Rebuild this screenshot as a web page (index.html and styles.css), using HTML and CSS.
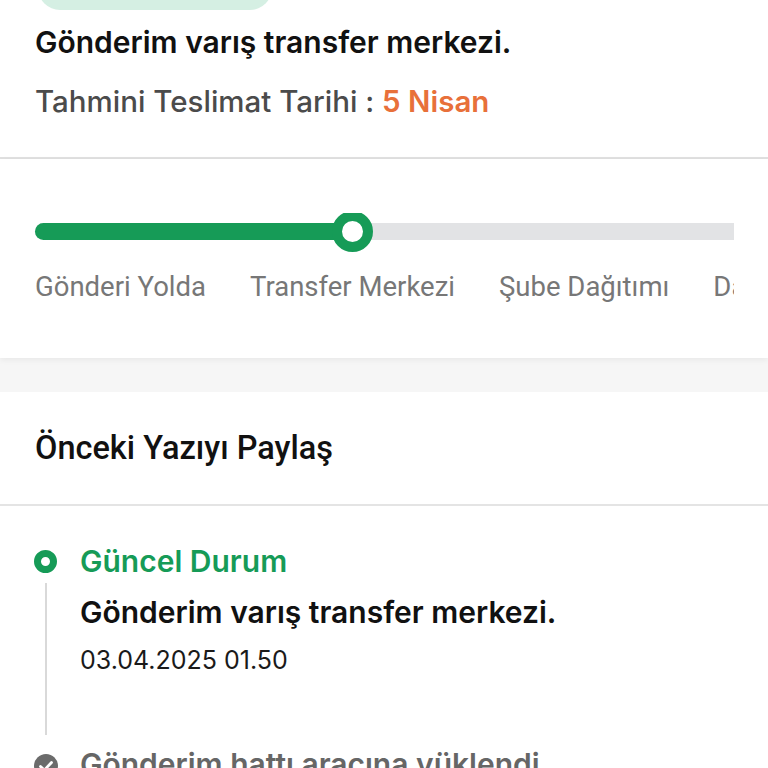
FILE: index.html
```html
<!DOCTYPE html>
<html lang="tr">
<head>
  <meta charset="UTF-8" />
  <meta name="viewport" content="width=device-width, initial-scale=1.0" />
  <title>Gönderi Takibi</title>
  <link rel="stylesheet" href="styles.css">
</head>
<body>
  <div class="summary">
    <div class="status-pill"></div>
    <h1 class="summary-title">Gönderim varış transfer merkezi.</h1>
    <p class="eta">Tahmini Teslimat Tarihi : <span class="eta-date">5 Nisan</span></p>
  </div>

  <div class="progress-card">
    <div class="stepper">
      <div class="stepper-inner">
        <div class="track">
          <div class="track-fill" style="width: 318px;"></div>
          <div class="track-knob" style="left: 297px;"></div>
        </div>
        <div class="step-labels">
          <span>Gönderi Yolda</span>
          <span>Transfer Merkezi</span>
          <span>Şube Dağıtımı</span>
          <span>Dağıtımda</span>
          <span>Teslim Edildi</span>
        </div>
      </div>
    </div>
  </div>

  <div class="band"></div>

  <div class="share-header">Önceki Yazıyı Paylaş</div>

  <div class="history">
    <div class="history-item current">
      <div class="rail">
        <span class="dot-ring"></span>
        <span class="rail-line"></span>
      </div>
      <div class="history-body">
        <div class="history-state">Güncel Durum</div>
        <div class="history-title">Gönderim varış transfer merkezi.</div>
        <div class="history-date">03.04.2025 01.50</div>
      </div>
    </div>
    <div class="history-item done">
      <div class="rail">
        <span class="dot-check">
          <svg viewBox="0 0 24 24" width="24" height="24">
            <circle cx="12" cy="12" r="12" fill="#6b6b6b" />
            <path d="M6.5 12.5l3.8 3.6 7.2-7.6" fill="none" stroke="#fff" stroke-width="2.8" stroke-linecap="round" stroke-linejoin="round" />
          </svg>
        </span>
      </div>
      <div class="history-body">
        <div class="history-state">Gönderim hattı aracına yüklendi</div>
        <div class="history-title">Gönderi aktarma merkezinden çıktı.</div>
      </div>
    </div>
  </div>
</body>
</html>
```

FILE: styles.css
```css
* {
  box-sizing: border-box;
}

body {
  font-family: 'Inter', 'Noto Sans', sans-serif;
  background-color: #ffffff;
  color: #111111;
  margin: 0;
  padding: 0;
  overflow: hidden;
}

.summary {
  padding: 0 35px 38px;
  border-bottom: 2px solid #e0e0e0;
}

.status-pill {
  width: 234px;
  height: 44px;
  margin: -34px 0 0 3px;
  background-color: #d5efe3;
  border-radius: 22px;
}

.summary-title {
  font-size: 30px;
  font-weight: 600;
  line-height: 36px;
  margin: 14px 0 0;
  color: #111;
}

.eta {
  font-size: 29.5px;
  font-weight: 500;
  line-height: 36px;
  margin: 23px 0 0;
  color: #4b4b4b;
}

.eta-date {
  color: #e8703a;
  font-weight: 600;
}

.progress-card {
  padding: 54px 34px 55px;
  background: #fff;
  box-shadow: 0 2px 6px rgba(0, 0, 0, 0.06);
  position: relative;
}

.stepper {
  overflow: hidden;
  padding: 10px 0 0;
}

.stepper-inner {
  width: 1200px;
  padding-left: 1px;
}

.track {
  position: relative;
  height: 17px;
  border-radius: 9px;
  background-color: #e2e3e5;
}

.track-fill {
  height: 100%;
  border-radius: 9px;
  background-color: #169b57;
}

.track-knob {
  position: absolute;
  top: -12px;
  width: 41px;
  height: 41px;
  border-radius: 50%;
  background: #fff;
  border: 10px solid #169b57;
}

.step-labels {
  display: flex;
  gap: 44px;
  margin-top: 31px;
  font-family: 'Roboto', sans-serif;
  font-size: 27.5px;
  line-height: 32px;
  color: #777;
  white-space: nowrap;
}

.band {
  height: 34px;
  background-color: #f6f6f6;
}

.share-header {
  font-family: 'Roboto', sans-serif;
  font-size: 32.5px;
  font-weight: 500;
  line-height: 38px;
  padding: 37px 35px 37px;
  border-bottom: 2px solid #e4e4e4;
}

.history {
  padding: 37px 34px 0;
}

.history-item {
  display: flex;
  gap: 23px;
}

.rail {
  width: 23px;
  display: flex;
  flex-direction: column;
  align-items: center;
  flex-shrink: 0;
}

.dot-ring {
  width: 23px;
  height: 23px;
  margin-top: 6.5px;
  border-radius: 50%;
  border: 7px solid #169b57;
}

.dot-check {
  width: 24px;
  height: 24px;
  margin-top: 8px;
}

.rail-line {
  flex: 1;
  width: 2px;
  margin: 10px 0 11px;
  background-color: #d9d9d9;
}

.history-body {
  padding-bottom: 71px;
}

.history-state {
  font-size: 30px;
  font-weight: 600;
  line-height: 36px;
  color: #169b57;
}

.done .history-state {
  color: #666;
}

.history-title {
  font-size: 30px;
  font-weight: 600;
  line-height: 36px;
  margin-top: 15px;
}

.history-date {
  font-size: 25px;
  line-height: 30px;
  margin-top: 15px;
  color: #1a1a1a;
}
```
